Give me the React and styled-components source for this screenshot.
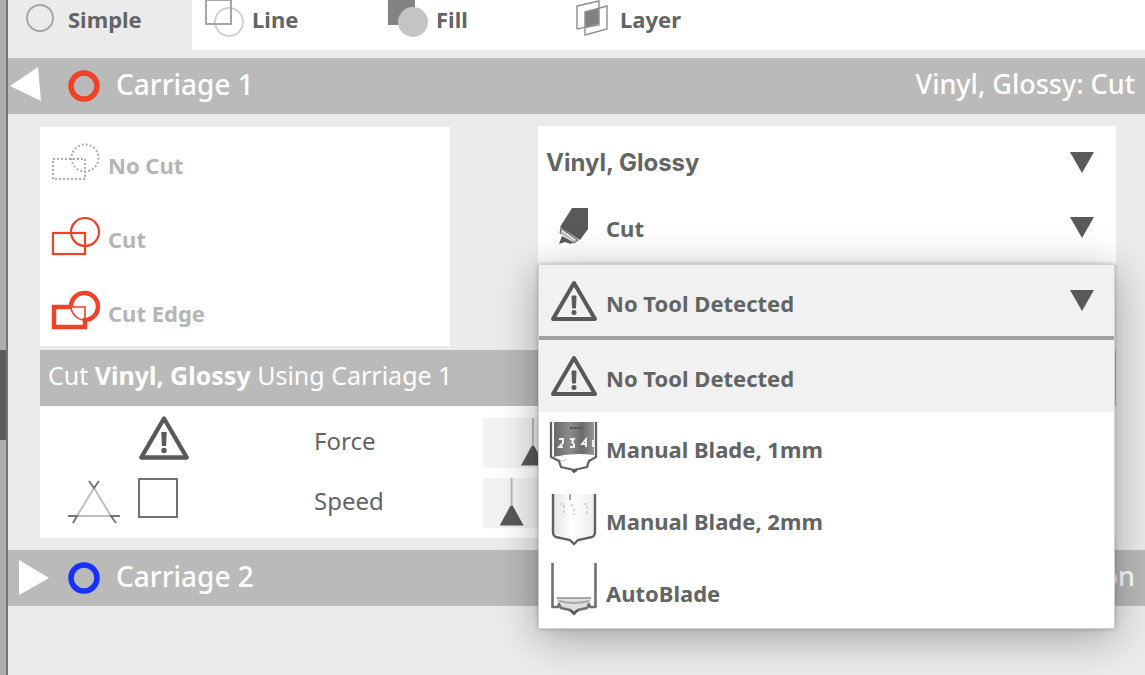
import React, { useState } from "react";
import styled, { createGlobalStyle, css } from "styled-components";

const color = {
  page: "#ebebeb",
  bar: "#bababa",
  text: "#636565",
  ink: "#585a5a",
  muted: "#b5b5b5",
  red: "#f04228",
  blue: "#1530ff",
};

const GlobalStyle = createGlobalStyle`
  *, *::before, *::after { box-sizing: border-box; }
  body {
    margin: 0;
    background: ${color.page};
    color: ${color.text};
    font-family: "Noto Sans", "Open Sans", sans-serif;
    font-size: 22px;
    line-height: 32px;
    overflow: hidden;
  }
  button, select, input { font: inherit; color: inherit; margin: 0; }
  svg { display: block; flex: none; overflow: visible; }
`;

const Shell = styled.div`
  display: flex;
  min-height: 100vh;
`;

const Gutter = styled.div`
  flex: 0 0 8px;
  padding-top: 350px;
  background: #abadb0;
  border-right: 2px solid #747474;
`;

const GutterThumb = styled.div`
  height: 90px;
  background: #5c5c5c;
`;

const Panel = styled.main`
  flex: 1;
  min-width: 0;
  background: ${color.page};
`;

const Tabs = styled.nav`
  display: flex;
  height: 50px;
  margin-bottom: 8px;
  background: #fff;
`;

const plainButton = css`
  border: 0;
  padding: 0;
  background: none;
  text-align: left;
  cursor: pointer;
`;

const Tab = styled.button`
  ${plainButton}
  flex: 0 0 184px;
  display: flex;
  align-items: center;
  gap: 8px;
  padding: 0 12px 10px;
  font-weight: 700;
  background: ${(p) => (p.$active ? color.page : "#fff")};
`;

const Label = styled.span`
  padding-bottom: 2px;
`;

const CarriageBar = styled.button`
  ${plainButton}
  display: flex;
  align-items: center;
  width: 100%;
  height: 56px;
  padding-right: 10px;
  gap: 16px;
  background: ${color.bar};
  color: #fff;
  font-size: 28px;
  font-weight: 500;
`;

const CarriageName = styled.span`
  flex: 1;
  padding-bottom: 4px;
`;

const CarriageStatus = styled.span`
  padding-bottom: 4px;
  font-size: 27px;
`;

const Body = styled.section`
  padding: 12px 29px 12px 32px;
`;

const Choices = styled.div`
  display: grid;
  grid-template-columns: 410fr 578fr;
  column-gap: 88px;
  align-items: start;
  margin-bottom: 4px;
`;

const LineTypes = styled.div`
  display: flex;
  flex-direction: column;
  gap: 30px;
  margin-top: 1px;
  padding: 17px 10px 10px;
  background: #fff;
`;

const LineType = styled.button`
  ${plainButton}
  display: flex;
  align-items: center;
  gap: 8px;
  height: 44px;
  color: ${color.muted};
  font-weight: 700;
`;

const Pickers = styled.div`
  position: relative;
  padding-bottom: 8px;
  background: #fff;
`;

const Picker = styled.label`
  display: flex;
  align-items: center;
  height: ${(p) => p.$height}px;
  padding: 0 21px 0 ${(p) => (p.$icon ? 12 : 8)}px;
  gap: 8px;
`;

const Select = styled.select`
  flex: 1;
  min-width: 0;
  height: 40px;
  padding: 0;
  border: 0;
  appearance: none;
  background: none;
  font-family: ${(p) => (p.$material ? '"Inter", sans-serif' : "inherit")};
  font-size: ${(p) => (p.$material ? 24 : 22)}px;
  font-weight: 700;
`;

const ToolMenu = styled.div`
  position: absolute;
  z-index: 2;
  top: 138px;
  left: 0;
  right: 1px;
  background: #fff;
  border: 1px solid #d2d2d2;
  box-shadow: 0 8px 40px rgba(0, 0, 0, 0.32), 0 0 4px rgba(0, 0, 0, 0.25);
  font-weight: 700;
`;

const ToolTrigger = styled.button`
  ${plainButton}
  display: flex;
  align-items: center;
  gap: 8px;
  width: 100%;
  height: 75px;
  padding: 0 19px 0 11px;
  background: #f1f1f1;
  border-bottom: 4px solid #a0a0a0;
  font-weight: 700;
`;

const ToolName = styled.span`
  flex: 1;
  padding-top: ${(p) => (p.$active ? 4 : 2)}px;
`;

const ToolList = styled.ul`
  list-style: none;
  margin: 0;
  padding: 0;
`;

const ToolOption = styled.li`
  display: flex;
  align-items: center;
  gap: 8px;
  height: 72px;
  padding: 0 11px;
  background: ${(p) => (p.$active ? "#f1f1f1" : "#fff")};
  cursor: pointer;
`;

const SettingsTitle = styled.h2`
  margin: 0;
  height: 56px;
  padding: 9px 8px;
  background: ${color.bar};
  color: #fff;
  font-size: 25px;
  font-weight: 400;
`;

const Settings = styled.div`
  padding: 5px 16px 7px 28px;
  background: #fff;
`;

const SettingRow = styled.div`
  display: grid;
  grid-template-columns: 70px 176px 169px 1fr;
  align-items: center;
  height: 60px;
  font-size: 24px;
`;

const Mark = styled.span`
  padding-bottom: 6px;
`;

const Check = styled.input`
  appearance: none;
  display: block;
  width: 40px;
  height: 40px;
  border: 2px solid #707272;
  background: #fff;

  &:checked { background: ${color.ink}; }
`;

const Slider = styled.input`
  appearance: none;
  display: block;
  width: 100%;
  height: 50px;
  background: #f3f3f3;

  &::-webkit-slider-thumb {
    appearance: none;
    width: 24px;
    height: 50px;
    background: linear-gradient(#b8b8b8 28px, ${color.ink} 28px 48px, transparent 48px);
    clip-path: polygon(11px 0, 13px 0, 13px 28px, 24px 48px, 0 48px, 11px 28px);
  }
`;

const SliderCell = styled.span`
  padding-top: 3px;
`;

const SimpleIcon = () => (
  <svg width="40" height="40" aria-hidden="true">
    <circle cx="20" cy="18" r="13" fill="none" stroke="#a6a6a6" strokeWidth="2" />
  </svg>
);

const LineIcon = () => (
  <svg width="40" height="40" fill="none" strokeWidth="2" aria-hidden="true">
    <circle cx="25" cy="22" r="14" stroke="#d2d2d2" />
    <path d="M2 0H27V24H2Z" stroke="#a6a6a6" />
  </svg>
);

const FillIcon = () => (
  <svg width="40" height="40" aria-hidden="true">
    <path d="M0 0H27V25H0Z" fill="#828484" />
    <circle cx="25" cy="22" r="15" fill="#c4c4c4" />
  </svg>
);

const LayerIcon = () => (
  <svg width="40" height="40" fill="none" aria-hidden="true">
    <path d="M13 12L27 8V24L13 28Z" fill="#808282" />
    <path d="M5 6L27 1V25L5 29Z" stroke="#8f8f8f" strokeWidth="1.4" />
    <path d="M13 12L35 6V29L13 35Z" stroke="#8f8f8f" strokeWidth="1.4" />
  </svg>
);

const Disclosure = ({ open }) => (
  <svg width="44" height="56" fill="#fff" aria-hidden="true">
    {open ? <path d="M2 28L30 9L33 43Z" /> : <path d="M11 10L41 28L11 45Z" />}
  </svg>
);

const Ring = ({ stroke }) => (
  <svg width="32" height="56" aria-hidden="true">
    <circle cx="16" cy="28" r="13" fill="none" stroke={stroke} strokeWidth="5.5" />
  </svg>
);

const NoCutIcon = () => (
  <svg width="50" height="44" fill="none" stroke="#a5a5a5" strokeWidth="2" strokeDasharray="1.8 2.2" aria-hidden="true">
    <rect x="3" y="15" width="32" height="20" />
    <circle cx="35" cy="14" r="13.5" />
  </svg>
);

const CutIcon = () => (
  <svg width="50" height="44" fill="none" stroke={color.red} strokeWidth="2.2" aria-hidden="true">
    <rect x="3" y="15" width="32" height="21" />
    <circle cx="35" cy="14" r="14" />
  </svg>
);

const CutEdgeIcon = () => (
  <svg width="50" height="44" fill="none" stroke={color.red} aria-hidden="true">
    <path d="M21 15H35V28" strokeWidth="1.6" />
    <path d="M21 15A14 14 0 0 0 35 28" strokeWidth="1.6" />
    <path d="M21 15H4V35H35V28A13.5 13.5 0 1 0 21 15" strokeWidth="4.5" />
  </svg>
);

const DownIcon = () => (
  <svg width="26" height="24" aria-hidden="true">
    <path d="M1 1H25L13 22Z" fill={color.ink} />
  </svg>
);

const WarningIcon = ({ size = 48 }) => (
  <svg width={size} height={size - 4} viewBox="0 0 48 44" aria-hidden="true">
    <path d="M24 4L45 40H3Z" fill="none" stroke={color.ink} strokeWidth="4" strokeLinejoin="round" />
    <path d="M22 17H26L25.500 29H22.500Z" fill={color.ink} stroke={color.ink} strokeLinejoin="round" />
    <circle cx="24" cy="33.500" r="2.500" fill={color.ink} />
  </svg>
);

const BladeIcon = () => (
  <svg width="48" height="48" viewBox="0 0 48 48" aria-hidden="true">
    <path d="M22 4H38V25L30 36L10 23Z" fill={color.ink} />
    <path d="M11 24L28 36L24 39L10 29Z" fill="#b9bbbb" stroke={color.ink} strokeWidth="1" />
    <path d="M12 32L23 38L21 40L15 38L9 40Z" fill={color.ink} />
    <path d="M12 27L25 36M11 30L22 37" stroke="#fff" strokeWidth="1" />
  </svg>
);

const OffsetIcon = () => (
  <svg width="54" height="50" fill="none" aria-hidden="true">
    <path d="M26 12L43 40H9Z" stroke="#c0c0c0" strokeWidth="2" />
    <path d="M21 5L26 12L31 5M0 40H9L5 47M52 40H43L48 47" stroke="#747676" strokeWidth="2" />
  </svg>
);

const ManualOneIcon = () => (
  <svg width="48" height="52" viewBox="0 0 48 52" aria-hidden="true">
    <defs>
      <linearGradient id="barrel">
        <stop offset="0" stopColor="#696b6b" />
        <stop offset="0.4" stopColor="#8a8c8c" />
        <stop offset="0.7" stopColor="#6a6c6c" />
        <stop offset="1" stopColor="#949696" />
      </linearGradient>
    </defs>
    <path d="M4 0H44V33Q24 30 4 35Z" fill="url(#barrel)" />
    <path d="M20 6H33" stroke="#505252" strokeWidth="2" strokeDasharray="3 1" />
    <path d="M9 17H13V21L9 25H13M20 17H24L22 20L24 22V25H20M36 25V17L32 22H37M43 18V25" fill="none" stroke="#f4f4f4" strokeWidth="1.800" />
    <path d="M4 35Q24 31 43 34L36 46L24 49L12 46Z" fill="#fff" />
    <path d="M9 37Q11 41 16 37" stroke="#d0d0d0" strokeWidth="1.500" fill="none" />
    <path d="M1 0V35L9 39L11 45L24 48L37 45L39 39L46 35V0" fill="none" stroke="#606262" strokeWidth="2.300" strokeLinejoin="round" />
    <path d="M22 48L24 50L27 48" stroke="#555" strokeWidth="2" fill="none" />
  </svg>
);

const ManualTwoIcon = () => (
  <svg width="48" height="52" viewBox="0 0 48 52" aria-hidden="true">
    <defs>
      <linearGradient id="sleeve">
        <stop offset="0" stopColor="#e6e6e6" />
        <stop offset="0.45" stopColor="#fff" />
        <stop offset="1" stopColor="#eee" />
      </linearGradient>
    </defs>
    <path d="M4 0H44V40L24 46L4 40Z" fill="url(#sleeve)" />
    <path d="M20 0V6" stroke="#aaa" strokeWidth="2" />
    <path d="M10 10H14V20M21 10L24 15V21M34 10H37V20" fill="none" stroke="#d0d0d0" strokeWidth="1.600" strokeDasharray="3 2" />
    <path d="M3 0V38Q3 42 6 43L20 46L24 50L28 46L42 43Q45 42 45 38V0" fill="none" stroke="#606262" strokeWidth="2.400" />
  </svg>
);

const AutoIcon = () => (
  <svg width="48" height="52" viewBox="0 3 48 52" aria-hidden="true">
    <path d="M6 34H42L39 44L24 48L9 44Z" fill="#dedede" />
    <path d="M7 35H41M9 38Q24 42 39 38" fill="none" stroke="#a8a8a8" strokeWidth="2" />
    <path d="M2.500 0V44H8L9 41L11 45L20 47L24 50L28 47L37 45L39 41L40 44H45.500V0" fill="none" stroke="#707272" strokeWidth="2.600" strokeLinejoin="round" />
    <path d="M20 47L24 51L28 47" stroke="#555" strokeWidth="2" fill="none" />
  </svg>
);

const tabs = [
  ["Simple", SimpleIcon],
  ["Line", LineIcon],
  ["Fill", FillIcon],
  ["Layer", LayerIcon],
];

const lineTypes = [
  ["No Cut", NoCutIcon],
  ["Cut", CutIcon],
  ["Cut Edge", CutEdgeIcon],
];

const tools = [
  ["No Tool Detected", WarningIcon],
  ["Manual Blade, 1mm", ManualOneIcon],
  ["Manual Blade, 2mm", ManualTwoIcon],
  ["AutoBlade", AutoIcon],
];

function Carriage({ name, status, ring, open }) {
  return (
    <CarriageBar type="button" aria-expanded={!!open}>
      <Disclosure open={open} />
      <Ring stroke={ring} />
      <CarriageName>{name}</CarriageName>
      <CarriageStatus>{status}</CarriageStatus>
    </CarriageBar>
  );
}

function ToolPicker() {
  const [selected, setSelected] = useState(0);
  const [label, Icon] = tools[selected];
  return (
    <ToolMenu>
      <ToolTrigger type="button" aria-haspopup="listbox" aria-expanded="true">
        <Icon />
        <ToolName $active>{label}</ToolName>
        <DownIcon />
      </ToolTrigger>
      <ToolList role="listbox" aria-label="Tool">
        {tools.map(([name, ToolIcon], i) => (
          <ToolOption
            key={name}
            role="option"
            aria-selected={i === selected}
            $active={i === selected}
            onClick={() => setSelected(i)}
          >
            <ToolIcon />
            <ToolName $active={i === selected}>{name}</ToolName>
          </ToolOption>
        ))}
      </ToolList>
    </ToolMenu>
  );
}

export default function App() {
  const [tab, setTab] = useState("Simple");
  return (
    <>
      <GlobalStyle />
      <Shell>
        <Gutter>
          <GutterThumb />
        </Gutter>
        <Panel>
          <Tabs>
            {tabs.map(([name, Icon]) => (
              <Tab key={name} type="button" $active={tab === name} onClick={() => setTab(name)}>
                <Icon />
                <Label>{name}</Label>
              </Tab>
            ))}
          </Tabs>
          <Carriage name="Carriage 1" status="Vinyl, Glossy: Cut" ring={color.red} open />
          <Body>
            <Choices>
              <LineTypes>
                {lineTypes.map(([name, Icon]) => (
                  <LineType key={name} type="button">
                    <Icon />
                    <Label>{name}</Label>
                  </LineType>
                ))}
              </LineTypes>
              <Pickers>
                <Picker $height={74}>
                  <Select $material aria-label="Material">
                    <option>Vinyl, Glossy</option>
                  </Select>
                  <DownIcon />
                </Picker>
                <Picker $height={56} $icon>
                  <BladeIcon />
                  <Select aria-label="Action">
                    <option>Cut</option>
                  </Select>
                  <DownIcon />
                </Picker>
                <ToolPicker />
              </Pickers>
            </Choices>
            <SettingsTitle>
              Cut <strong>Vinyl, Glossy</strong> Using Carriage 1
            </SettingsTitle>
            <Settings>
              <SettingRow>
                <span />
                <Mark>
                  <WarningIcon size={52} />
                </Mark>
                <label htmlFor="force">Force</label>
                <SliderCell>
                  <Slider id="force" type="range" min="0" max="1000" defaultValue="64" />
                </SliderCell>
              </SettingRow>
              <SettingRow>
                <OffsetIcon />
                <Mark>
                  <Check type="checkbox" aria-label="Line segment overcut" />
                </Mark>
                <label htmlFor="speed">Speed</label>
                <SliderCell>
                  <Slider id="speed" type="range" min="0" max="1000" defaultValue="28" />
                </SliderCell>
              </SettingRow>
            </Settings>
          </Body>
          <Carriage name="Carriage 2" status="No Action" ring={color.blue} />
        </Panel>
      </Shell>
    </>
  );
}
